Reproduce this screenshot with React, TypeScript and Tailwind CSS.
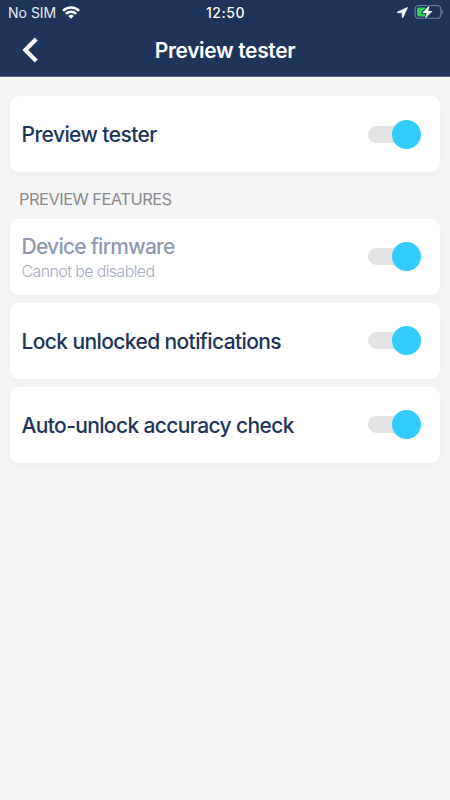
type RowProps = {
  title: string;
  titleClass: string;
  toggleClass?: string;
  subtitle?: string;
};

function Toggle({ className = "mb-px" }: { className?: string }) {
  return (
    <button type="button" role="switch" aria-checked="true" className={`flex h-[29px] w-[53px] shrink-0 items-center ${className}`}>
      <span className="h-[17px] w-[40px] rounded-full bg-[#e3e3e3]" />
      <span className="-ml-[16px] h-[29px] w-[29px] shrink-0 rounded-full bg-[#33ccff]" />
    </button>
  );
}

function Row({ title, titleClass, toggleClass, subtitle }: RowProps) {
  return (
    <div className="flex h-[76px] items-center justify-between rounded-[9px] bg-white pr-[19px] pl-[11.5px] shadow-[0_3px_8px_rgba(0,0,0,0.025)]">
      <div className="flex flex-col pt-[2px] whitespace-nowrap">
        <span className={`text-[21px] leading-[26px] font-medium ${titleClass}`}>{title}</span>
        {subtitle && (
          <span className="text-[16px] leading-[22px] font-light tracking-[-0.62px] text-[#a5abc0]">{subtitle}</span>
        )}
      </div>
      <Toggle className={toggleClass} />
    </div>
  );
}

function StatusBar() {
  return (
    <div className="grid h-[24px] grid-cols-3 items-center pr-[7px] pl-[8px] text-white">
      <div className="flex items-center gap-[6px]">
        <span className="pt-px text-[14px] leading-[24px] tracking-[0px] whitespace-nowrap text-[#e4e8f0]">No SIM</span>
        <svg className="mb-px" width="18" height="13" viewBox="0 0 18 13" fill="none" stroke="white" strokeWidth="2.5">
          <path d="M1 4.8C5.5 0.3 12.5 0.3 17 4.8" />
          <path d="M3.9 7.8C6.8 5 11.2 5 14.1 7.8" />
          <path d="M6.2 9.9C7.8 8.4 10.2 8.4 11.8 9.9L9 12.7Z" fill="white" stroke="none" />
        </svg>
      </div>
      <span className="pt-px text-center text-[14px] leading-[24px] font-medium tracking-[0.5px]">12:50</span>
      <div className="flex items-center justify-end gap-[6.5px] pb-px">
        <svg width="11" height="11" viewBox="0 0 11 11" fill="white">
          <path d="M10.7 0.3L0.4 4.9C0 5.2 0.1 5.8 0.5 5.8H5.1V10.4C5.1 10.9 5.8 11 6.1 10.5Z" stroke="white" strokeWidth="0.5" />
        </svg>
        <svg width="29" height="16" viewBox="0 0 29 16" fill="none">
          <rect x="1.1" y="1.5" width="25.8" height="12.8" rx="3.6" stroke="#77839d" strokeWidth="1.1" />
          <path d="M27.9 5.8C29.2 6.5 29.2 9.3 27.9 10Z" fill="#77839d" />
          <rect x="3" y="3.4" width="9.3" height="9" rx="1.8" fill="#30d158" />
          <path d="M15.6 0.9L8.3 8.9H12.5L10.8 15.2L18.6 6.9H14.2Z" fill="white" stroke="#20345a" strokeWidth="1.6" strokeLinejoin="round" paintOrder="stroke" />
        </svg>
      </div>
    </div>
  );
}

export default function App() {
  return (
    <main className="h-[800px] w-[450px] overflow-hidden bg-[#f4f4f4] font-[Inter,'Liberation_Sans',sans-serif]">
      <header className="h-[77px] border-b border-[#596681] bg-[#20345a]">
        <StatusBar />
        <div className="grid h-[52px] grid-cols-[60px_1fr_60px] items-center text-white">
          <button type="button" aria-label="Back" className="pl-[22px]">
            <svg width="16" height="26" viewBox="0 0 16 26" fill="none" stroke="white" strokeWidth="4.2">
              <path d="M14.2 2L3.4 13L14.2 24" />
            </svg>
          </button>
          <h1 className="pt-[2px] text-center text-[21px] leading-[28px] font-semibold tracking-[-0.35px]">Preview tester</h1>
        </div>
      </header>
      <div className="px-[10px] pt-[19px]">
        <Row title="Preview tester" titleClass="tracking-[-0.58px] text-[#20345a]" toggleClass="mt-px" />
        <h2 className="flex h-[47px] items-center pt-[7px] pl-[9px] text-[16.5px] leading-[20px] tracking-[-0.55px] text-[#8b8b90]">
          PREVIEW FEATURES
        </h2>
        <div className="flex flex-col gap-[8px]">
          <Row title="Device firmware" titleClass="tracking-[-0.74px] text-[#8f99ac]" subtitle="Cannot be disabled" />
          <Row title="Lock unlocked notifications" titleClass="tracking-[-0.61px] text-[#20345a]" />
          <Row title="Auto-unlock accuracy check" titleClass="tracking-[-0.63px] text-[#20345a]" />
        </div>
      </div>
    </main>
  );
}
